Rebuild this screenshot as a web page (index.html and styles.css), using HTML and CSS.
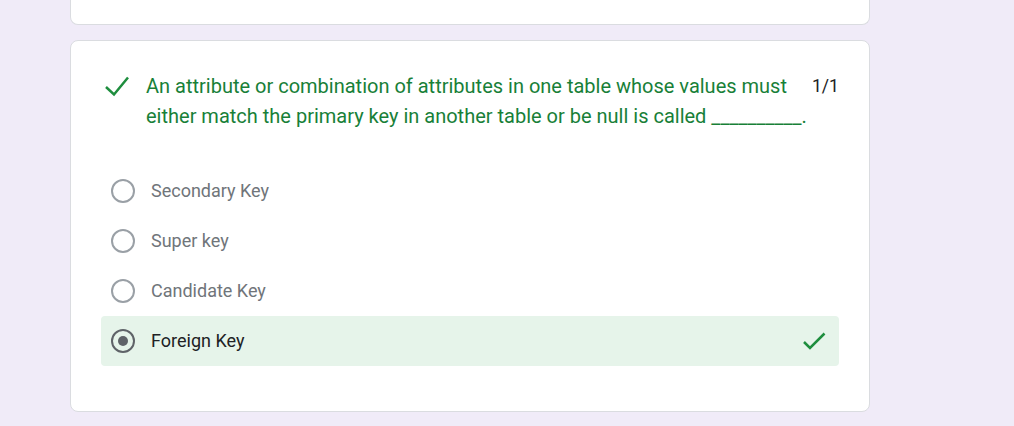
FILE: index.html
```html
<!DOCTYPE html>
<html>
<head>
<meta charset="utf-8">
<link rel="stylesheet" href="styles.css">
</head>
<body>
<div class="page">
  <div class="card prev"></div>
  <div class="card question">
    <div class="q-row">
      <svg class="q-check" width="28" height="24" viewBox="0 0 28 24"><polyline points="3,12 11,19.5 25,2.5" fill="none" stroke="#1e8e3e" stroke-width="2.5"/></svg>
      <div class="q-text">An attribute or combination of attributes in one table whose values must either match the primary key in another table or be null is called __________.</div>
      <div class="q-points">1/1</div>
    </div>
    <div class="options">
      <div class="option"><span class="radio"></span><span class="opt-label">Secondary Key</span></div>
      <div class="option"><span class="radio"></span><span class="opt-label">Super key</span></div>
      <div class="option"><span class="radio"></span><span class="opt-label">Candidate Key</span></div>
      <div class="option correct"><span class="radio checked"></span><span class="opt-label">Foreign Key</span>
        <svg class="opt-check" width="24" height="20" viewBox="0 0 24 20"><polyline points="2,10 8,16 22.5,1.5" fill="none" stroke="#1e8e3e" stroke-width="2.5"/></svg>
      </div>
    </div>
  </div>
</div>
</body>
</html>
```

FILE: styles.css
```css
* { box-sizing: border-box; }
html, body { margin: 0; padding: 0; }
body {
  background: #f0ebf8;
  font-family: Roboto, "Noto Sans", Arial, sans-serif;
  width: 1014px;
  height: 426px;
  overflow: hidden;
}
.page {
  width: 800px;
  margin-left: 70px;
}
.card {
  background: #fff;
  border: 1px solid #dadce0;
  border-radius: 8px;
}
.card.prev {
  height: 25px;
  border-top: none;
  border-radius: 0 0 8px 8px;
  margin-bottom: 15px;
}
.card.question {
  height: 372px;
  padding: 30px 30px 0 30px;
}
.q-row {
  display: flex;
  align-items: flex-start;
}
.q-check {
  flex: none;
  margin-top: 4px;
  margin-left: 2px;
}
.q-text {
  flex: 1;
  margin-left: 15px;
  color: #188038;
  font-size: 20px;
  line-height: 30px;
}
.q-points {
  flex: none;
  margin-left: 4px;
  color: #202124;
  font-size: 17.6px;
  line-height: 30px;
}
.options {
  margin-top: 35px;
}
.option {
  display: flex;
  align-items: center;
  height: 50px;
  padding-left: 10px;
  border-radius: 4px;
}
.option.correct {
  background: #e6f4ea;
}
.radio {
  flex: none;
  width: 24px;
  height: 24px;
  border: 2px solid #9aa0a6;
  border-radius: 50%;
  display: flex;
  align-items: center;
  justify-content: center;
}
.radio.checked {
  border-color: #5f6368;
}
.radio.checked::after {
  content: "";
  width: 10px;
  height: 10px;
  border-radius: 50%;
  background: #5f6368;
}
.opt-label {
  margin-left: 16px;
  margin-bottom: 2px;
  font-size: 18px;
  color: #70757a;
}
.correct .opt-label {
  color: #202124;
}
.opt-check {
  margin-left: auto;
  margin-right: 13px;
  margin-top: 2px;
}
```
